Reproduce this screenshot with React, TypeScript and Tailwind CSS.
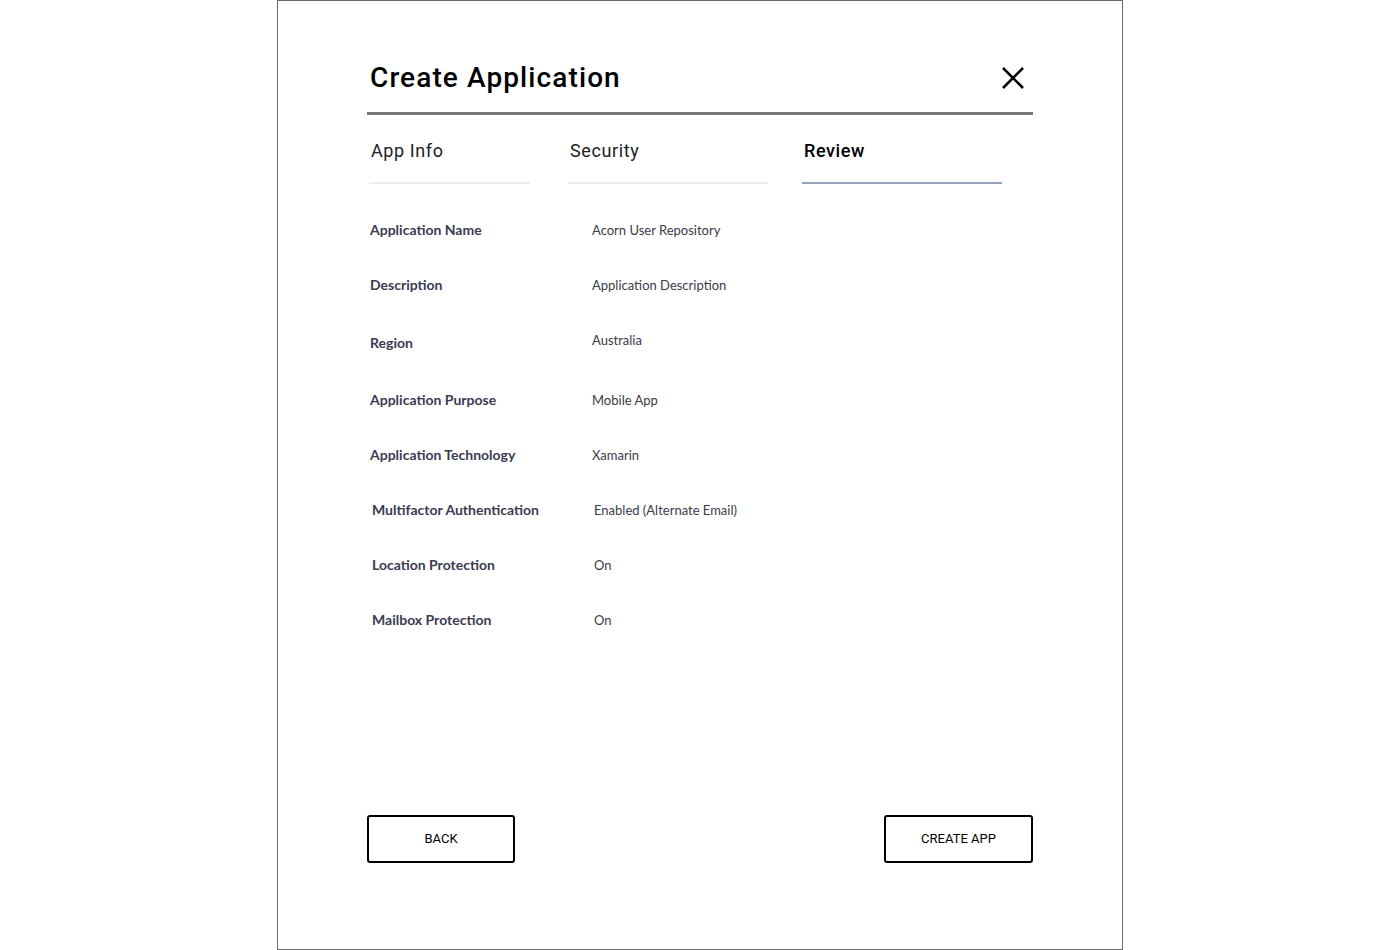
import React from 'react';

const tabs = [
  { label: 'App Info', className: 'ml-[2px] w-[161px]', active: false },
  { label: 'Security', className: 'ml-[38px] w-[200px]', active: false },
  { label: 'Review', className: 'ml-[34px] w-[200px]', active: true },
];

const rows = [
  { label: 'Application Name', value: 'Acorn User Repository', h: 'h-[55px]', shift: false },
  { label: 'Description', value: 'Application Description', h: 'h-[58px]', shift: false },
  { label: 'Region', value: 'Australia', h: 'h-[57px]', shift: false, valueUp: true },
  { label: 'Application Purpose', value: 'Mobile App', h: 'h-[55px]', shift: false },
  { label: 'Application Technology', value: 'Xamarin', h: 'h-[55px]', shift: false },
  { label: 'Multifactor Authentication', value: 'Enabled (Alternate Email)', h: 'h-[55px]', shift: true },
  { label: 'Location Protection', value: 'On', h: 'h-[55px]', shift: true },
  { label: 'Mailbox Protection', value: 'On', h: 'h-[55px]', shift: true },
];

export default function App() {
  return (
    <div className="w-full h-[950px] bg-white">
      <div className="mx-auto w-[846px] h-[950px] border border-[#6b6b6b] flex flex-col pl-[89px] pr-[89px]">
        {/* Header */}
        <div className="mt-[57px] flex items-center justify-between h-[40px] pl-[3px] pr-[8px]">
          <h1 className="text-[28px] font-medium text-black tracking-[1.1px] font-['Roboto',sans-serif]">
            Create Application
          </h1>
          <button type="button" className="w-[24px] h-[24px] flex items-center justify-center">
            <svg width="24" height="24" viewBox="0 0 24 24" fill="none" stroke="black" strokeWidth="2.6">
              <path d="M2 2L22 22M22 2L2 22" />
            </svg>
          </button>
        </div>
        <div className="mt-[14px] h-[3px] bg-[#777777]" />

        {/* Tabs */}
        <div className="flex mt-[23px]">
          {tabs.map((t) => (
            <div key={t.label} className={t.className}>
              <div
                className={`h-[44px] pl-[2px] text-[18px] leading-[25px] tracking-[0.6px] font-['Roboto',sans-serif] ${
                  t.active ? 'font-medium text-black' : 'text-[#222]'
                }`}
              >
                {t.label}
              </div>
              <div className={t.active ? 'h-[2px] bg-[#97a3b9]' : 'h-[2px] bg-[#eeeeee]'} />
            </div>
          ))}
        </div>

        {/* Review rows */}
        <div className="mt-[37px] flex flex-col font-['Lato',sans-serif] text-[13px]">
          {rows.map((r) => (
            <div key={r.label} className={`flex ${r.h} ${r.shift ? 'pl-[5px]' : 'pl-[3px]'}`}>
              <div className="w-[222px] text-[14px] leading-[17px] font-bold text-[#3b3b52]">{r.label}</div>
              <div className={`text-[#3b3b4a] leading-[19px] ${r.valueUp ? '-mt-[3px]' : ''}`}>{r.value}</div>
            </div>
          ))}
        </div>

        <div className="flex-1" />

        {/* Footer buttons */}
        <div className="flex justify-between mb-[86px] font-['Roboto',sans-serif]">
          <button
            type="button"
            className="w-[148px] h-[48px] border-2 border-black rounded-[3px] text-[13px] text-black"
          >
            BACK
          </button>
          <button
            type="button"
            className="w-[149px] h-[48px] border-2 border-black rounded-[3px] text-[13px] text-black"
          >
            CREATE APP
          </button>
        </div>
      </div>
    </div>
  );
}
